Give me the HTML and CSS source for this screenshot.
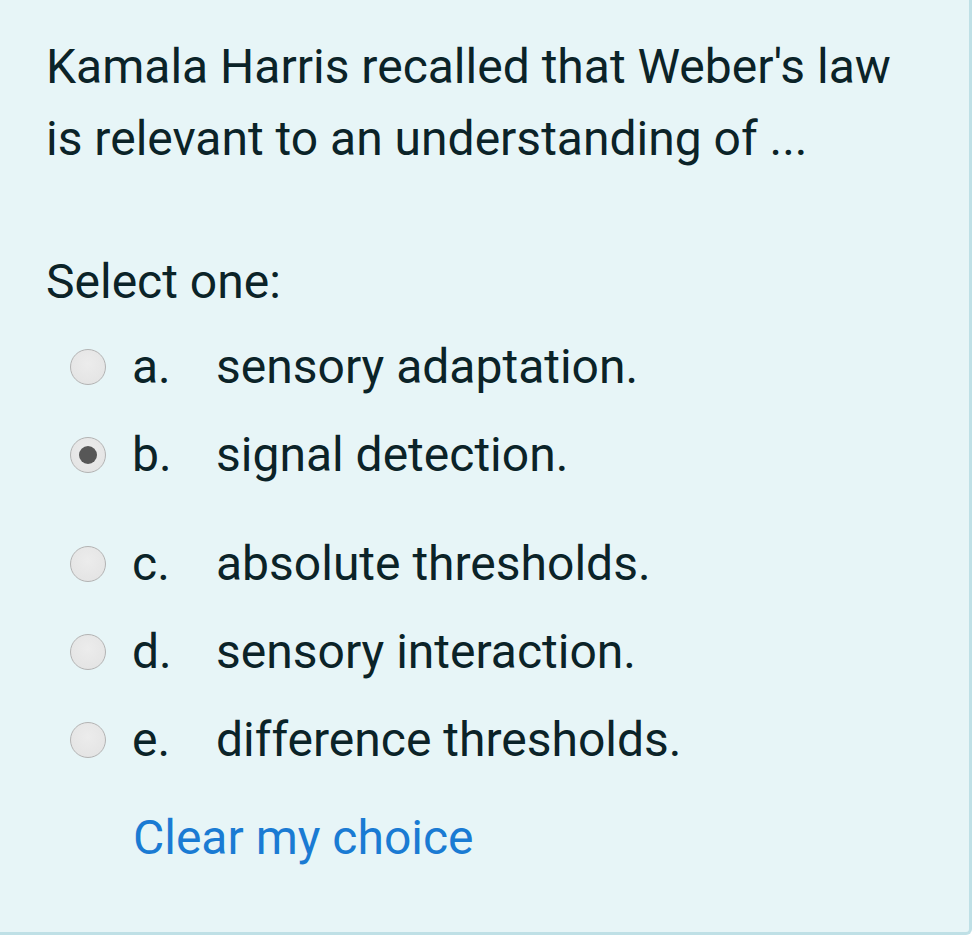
FILE: index.html
```html
<!DOCTYPE html>
<html>
<head>
<meta charset="utf-8">
<link rel="stylesheet" href="styles.css">
</head>
<body>
<div class="card">
  <div class="qtext">Kamala Harris recalled that Weber's law is relevant to an understanding of ...</div>
  <div class="prompt">Select one:</div>
  <div class="answers">
    <div class="opt"><span class="radio"></span><span class="letter">a.</span><span class="label">sensory adaptation.</span></div>
    <div class="opt"><span class="radio checked"></span><span class="letter">b.</span><span class="label">signal detection.</span></div>
    <div class="opt gap"><span class="radio"></span><span class="letter">c.</span><span class="label">absolute thresholds.</span></div>
    <div class="opt"><span class="radio"></span><span class="letter">d.</span><span class="label">sensory interaction.</span></div>
    <div class="opt"><span class="radio"></span><span class="letter">e.</span><span class="label">difference thresholds.</span></div>
  </div>
  <a class="clear" href="#">Clear my choice</a>
</div>
</body>
</html>
```
FILE: styles.css
```css
html, body {
  margin: 0;
  padding: 0;
}
body {
  font-family: Roboto, "Noto Sans", sans-serif;
  color: #0b2328;
  background: #ffffff;
}
.card {
  box-sizing: border-box;
  width: 972px;
  height: 935px;
  background: #e7f5f7;
  border-right: 3px solid #bfe0e6;
  border-bottom: 3px solid #bfe0e6;
  border-bottom-right-radius: 6px;
  padding: 31px 0 0 46px;
  font-size: 48px;
  line-height: 72px;
  display: flex;
  flex-direction: column;
  align-items: flex-start;
}
.qtext {
  width: 880px;
}
.prompt {
  margin-top: 71px;
}
.answers {
  margin-top: 13px;
  margin-left: 24px;
  display: flex;
  flex-direction: column;
  gap: 16px;
}
.opt {
  display: flex;
  align-items: center;
  height: 72px;
}
.opt.gap {
  margin-top: 21px;
}
.radio {
  box-sizing: border-box;
  width: 36px;
  height: 36px;
  border-radius: 50%;
  border: 1.5px solid #b3b3b3;
  background: radial-gradient(circle at 50% 40%, #ececec 0%, #e2e2e2 100%);
  display: flex;
  align-items: center;
  justify-content: center;
  margin-right: 26px;
  flex: none;
}
.radio.checked::after {
  content: "";
  width: 18px;
  height: 18px;
  border-radius: 50%;
  background: #575757;
}
.letter {
  width: 84px;
}
.clear {
  margin-top: 26px;
  margin-left: 87px;
  color: #1a7bd3;
  text-decoration: none;
}
```
